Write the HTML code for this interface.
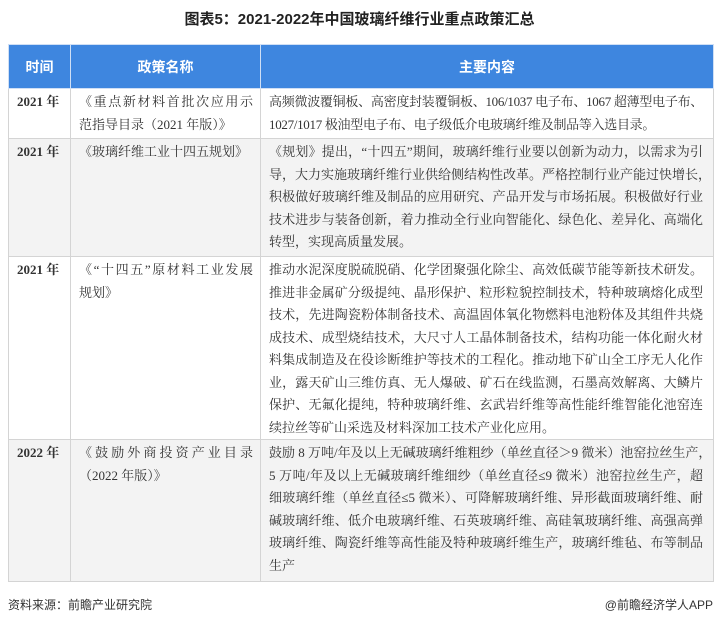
<!DOCTYPE html>
<html><head><meta charset="utf-8"><style>
*{margin:0;padding:0;box-sizing:border-box}
body{width:719px;height:625px;background:#fff;position:relative;overflow:hidden;font-family:"Liberation Serif","Noto Serif CJK SC",serif;color:#333}
.title{position:absolute;top:8px;left:0;width:719px;text-align:center;font:bold 15px "Liberation Sans","Noto Sans CJK SC",sans-serif;color:#222}
table{position:absolute;left:8px;top:44px;width:705px;border-collapse:collapse;table-layout:fixed}
td,th{border:1px solid #d4d4d4;vertical-align:top;font-size:13px;line-height:22.5px}
th{background:#3e86df;color:#fff;height:44px;vertical-align:middle;font:bold 14px "Liberation Sans","Noto Sans CJK SC",sans-serif;border-color:#cfdff5}
td{padding:2px 7px 0 8px}
td.c{padding-right:10px}
td.y{padding-left:8px;font-weight:bold;font-size:13px}
.g td{background:#f3f3f3}
.j div{text-align:justify;text-align-last:justify;white-space:nowrap}
.j div:last-child{text-align-last:left}
.t div{letter-spacing:-0.3px}
.foot{position:absolute;top:596px;font:12px "Liberation Sans","Noto Sans CJK SC",sans-serif;color:#333}
</style></head><body>
<div class="title">图表5：2021-2022年中国玻璃纤维行业重点政策汇总</div>
<table>
<colgroup><col style="width:62px"><col style="width:190px"><col style="width:453px"></colgroup>
<tr><th>时间</th><th>政策名称</th><th>主要内容</th></tr>
<tr style="height:50px"><td class="y">2021 年</td><td class="j"><div>《重点新材料首批次应用示</div><div>范指导目录（2021 年版）》</div></td><td class="j c t"><div>高频微波覆铜板、高密度封装覆铜板、106/1037 电子布、1067 超薄型电子布、</div><div>1027/1017 极油型电子布、电子级低介电玻璃纤维及制品等入选目录。</div></td></tr>
<tr class="g" style="height:118px"><td class="y">2021 年</td><td><div>《玻璃纤维工业十四五规划》</div></td><td class="j c"><div>《规划》提出，“十四五”期间，玻璃纤维行业要以创新为动力，以需求为引</div><div>导，大力实施玻璃纤维行业供给侧结构性改革。严格控制行业产能过快增长，</div><div>积极做好玻璃纤维及制品的应用研究、产品开发与市场拓展。积极做好行业</div><div>技术进步与装备创新，着力推动全行业向智能化、绿色化、差异化、高端化</div><div>转型，实现高质量发展。</div></td></tr>
<tr style="height:181px"><td class="y">2021 年</td><td class="j"><div>《“十四五”原材料工业发展</div><div>规划》</div></td><td class="j c"><div>推动水泥深度脱硫脱硝、化学团聚强化除尘、高效低碳节能等新技术研发。</div><div>推进非金属矿分级提纯、晶形保护、粒形粒貌控制技术，特种玻璃熔化成型</div><div>技术，先进陶瓷粉体制备技术、高温固体氧化物燃料电池粉体及其组件共烧</div><div>成技术、成型烧结技术，大尺寸人工晶体制备技术，结构功能一体化耐火材</div><div>料集成制造及在役诊断维护等技术的工程化。推动地下矿山全工序无人化作</div><div>业，露天矿山三维仿真、无人爆破、矿石在线监测，石墨高效解离、大鳞片</div><div>保护、无氟化提纯，特种玻璃纤维、玄武岩纤维等高性能纤维智能化池窑连</div><div>续拉丝等矿山采选及材料深加工技术产业化应用。</div></td></tr>
<tr class="g" style="height:142px"><td class="y">2022 年</td><td class="j"><div>《鼓励外商投资产业目录</div><div>（2022 年版）》</div></td><td class="j c"><div>鼓励 8 万吨/年及以上无碱玻璃纤维粗纱（单丝直径＞9 微米）池窑拉丝生产，</div><div>5 万吨/年及以上无碱玻璃纤维细纱（单丝直径≤9 微米）池窑拉丝生产，超</div><div>细玻璃纤维（单丝直径≤5 微米）、可降解玻璃纤维、异形截面玻璃纤维、耐</div><div>碱玻璃纤维、低介电玻璃纤维、石英玻璃纤维、高硅氧玻璃纤维、高强高弹</div><div>玻璃纤维、陶瓷纤维等高性能及特种玻璃纤维生产，玻璃纤维毡、布等制品</div><div>生产</div></td></tr>
</table>
<div class="foot" style="left:8px">资料来源：前瞻产业研究院</div>
<div class="foot" style="right:6px">@前瞻经济学人APP</div>
</body></html>
